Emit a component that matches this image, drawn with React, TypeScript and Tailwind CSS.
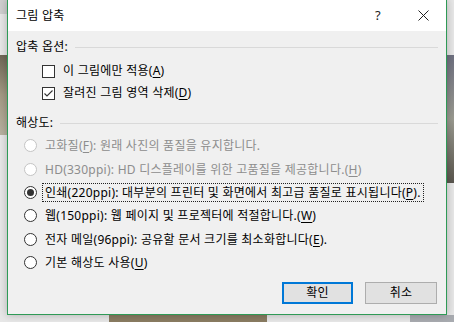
import React from 'react'

const font = { fontFamily: '"Noto Sans", "Noto Sans CJK KR", sans-serif' }

function Key({ k }: { k: string }) {
  return (
    <>
      (<span className="underline underline-offset-2">{k}</span>)
    </>
  )
}

function Check({ checked, children }: { checked?: boolean; children: React.ReactNode }) {
  return (
    <div className="flex items-center h-[22px]">
      <div className="w-[13px] h-[13px] border border-[#333] bg-white flex items-center justify-center">
        {checked && (
          <svg width="11" height="11" viewBox="0 0 11 11">
            <path d="M1.5 5.5 L4 8 L9.5 2.5" fill="none" stroke="#333" strokeWidth="1.1" />
          </svg>
        )}
      </div>
      <span className="ml-[8px]">{children}</span>
    </div>
  )
}

function Radio({
  checked,
  disabled,
  focused,
  children,
}: {
  checked?: boolean
  disabled?: boolean
  focused?: boolean
  children: React.ReactNode
}) {
  return (
    <div className="flex items-center h-[23.4px]">
      <div
        className={
          'w-[13px] h-[13px] rounded-full border bg-white flex items-center justify-center shrink-0 ' +
          (disabled ? 'border-[#c4c4c4]' : 'border-[#333]')
        }
      >
        {checked && <div className="w-[7px] h-[7px] rounded-full bg-[#333]" />}
      </div>
      <span
        className={
          'ml-[5px] px-[2px] leading-[17px] whitespace-nowrap border ' +
          (focused ? 'border-dotted border-[#222]' : 'border-transparent') +
          (disabled ? ' text-[#8d8d8d]' : ' text-black')
        }
      >
        {children}
      </span>
    </div>
  )
}

export default function App() {
  return (
    <div
      className="relative w-[454px] h-[322px] overflow-hidden bg-[#e7e7e7] text-[12px] tracking-[0.25px]"
      style={font}
    >
      {/* 뒤쪽 배경 사진 조각들 */}
      <div className="absolute left-0 top-0 w-[7px] h-[14px] bg-[#cfcfcf]" />
      <div className="absolute left-0 top-[55px] w-[7px] h-[80px] bg-gradient-to-b from-[#6f6757] via-[#a39a84] to-[#b8b2a0]" />
      <div className="absolute right-0 top-[55px] w-[8px] h-[128px] bg-gradient-to-b from-[#6e7080] via-[#9a9a90] to-[#5a564e]" />
      <div className="absolute left-[109px] top-[315px] w-[158px] h-[7px] bg-[#8a7c62]" />
      <div className="absolute left-[410px] top-[315px] w-[44px] h-[7px] bg-[#a8abb0]" />

      <div className="relative ml-[7px] -mt-[1px] w-[440px] h-[316px] border border-[#2e9a56] bg-[#f0f0f0] flex flex-col shadow-[0_0_8px_rgba(0,0,0,0.25)]">
        {/* 제목 표시줄 */}
        <div className="h-[31px] bg-white flex items-center pl-[8px] shrink-0">
          <span className="text-black">그림 압축</span>
          <span className="ml-auto mr-[37px] text-[13px] text-[#222]">?</span>
          <svg width="11" height="11" viewBox="0 0 11 11" className="mr-[17px]">
            <path d="M0.5 0.5 L10.5 10.5 M10.5 0.5 L0.5 10.5" stroke="#222" strokeWidth="1" />
          </svg>
        </div>

        <div className="px-[8px] pt-[7px]">
          <div className="flex items-center h-[18px]">
            <span>압축 옵션:</span>
            <div className="flex-1 ml-[7px] h-px bg-[#d9d9d9]" />
          </div>
          <div className="pl-[26px] pt-[4px]">
            <Check>
              이 그림에만 적용<Key k="A" />
            </Check>
            <Check checked>
              잘려진 그림 영역 삭제<Key k="D" />
            </Check>
          </div>

          <div className="flex items-center h-[18px] mt-[10px]">
            <span>해상도:</span>
            <div className="flex-1 ml-[7px] h-px bg-[#d9d9d9]" />
          </div>
          <div className="pl-[8px] pt-[2px]">
            <Radio disabled>
              고화질<Key k="F" />: 원래 사진의 품질을 유지합니다.
            </Radio>
            <Radio disabled>
              HD(330ppi): HD 디스플레이를 위한 고품질을 제공합니다.<Key k="H" />
            </Radio>
            <Radio checked focused>
              인쇄(220ppi): 대부분의 프린터 및 화면에서 최고급 품질로 표시됩니다<Key k="P" />.
            </Radio>
            <Radio>
              웹(150ppi): 웹 페이지 및 프로젝터에 적절합니다.<Key k="W" />
            </Radio>
            <Radio>
              전자 메일(96ppi): 공유할 문서 크기를 최소화합니다<Key k="E" />.
            </Radio>
            <Radio>
              기본 해상도 사용<Key k="U" />
            </Radio>
          </div>

          <div className="flex justify-end gap-[12px] mt-[8px] pr-[1px]">
            <button className="w-[71px] h-[22px] border-2 border-[#0078d7] bg-[#e1e1e1] text-black">확인</button>
            <button className="w-[72px] h-[22px] border border-[#adadad] bg-[#e1e1e1] text-black">취소</button>
          </div>
        </div>
      </div>
    </div>
  )
}
